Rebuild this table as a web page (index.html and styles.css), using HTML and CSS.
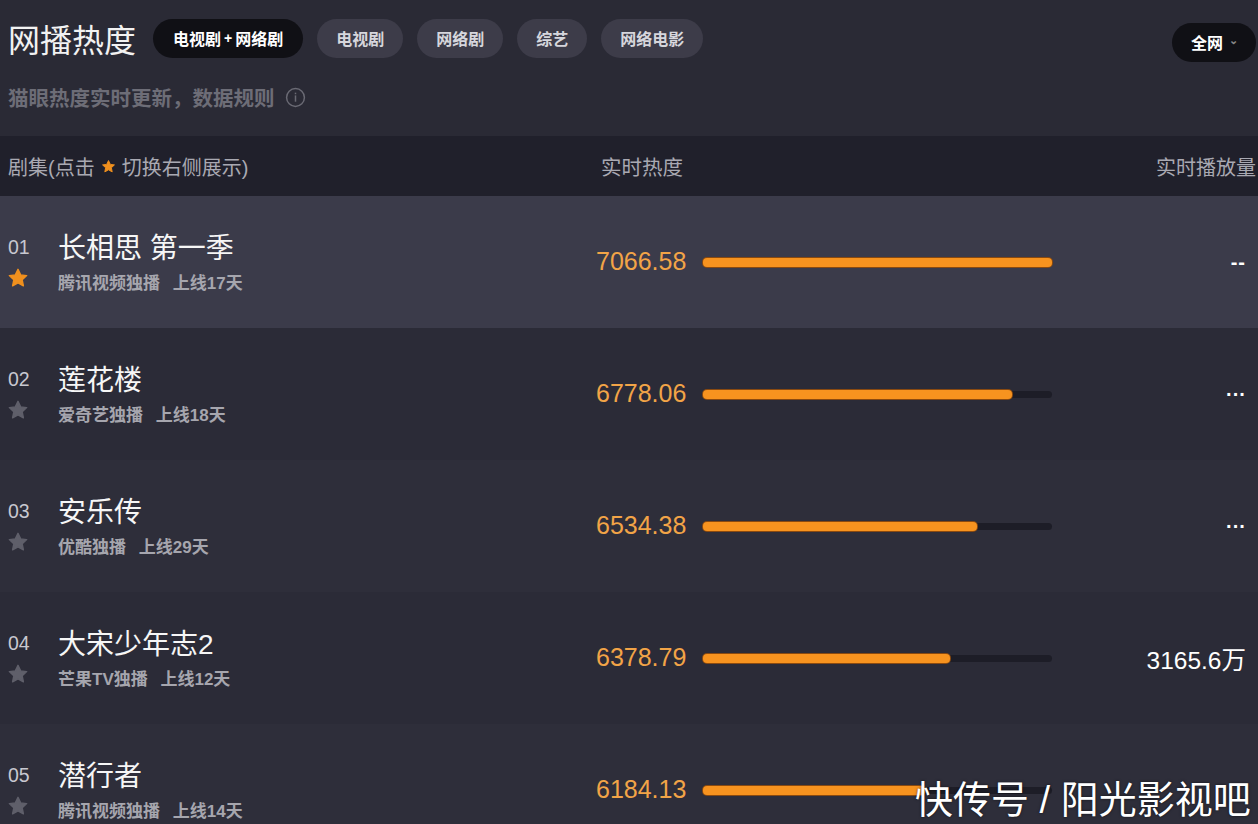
FILE: index.html
```html
<!DOCTYPE html>
<html>
<head>
    <meta charset="utf-8" />
    <title>网播热度</title>
    <link rel="stylesheet" href="styles.css">
</head>
<body>
    <div id="oldal">
        <div id="fejlec">
            <div class="fejlec-bal">
                <h1 class="cim">网播热度</h1>
                <span class="tab aktiv">电视剧<span class="plusz">+</span>网络剧</span>
                <span class="tab">电视剧</span>
                <span class="tab">网络剧</span>
                <span class="tab">综艺</span>
                <span class="tab">网络电影</span>
            </div>
            <span class="tab aktiv halo">全网 <span class="nyil">⌄</span></span>
        </div>
        <div class="alcim">猫眼热度实时更新，数据规则
            <svg class="info" viewBox="0 0 20 20" width="21" height="21"><circle cx="10" cy="10" r="8.5" fill="none" stroke="#6a6a74" stroke-width="1.4"/><rect x="9.3" y="8" width="1.4" height="6" fill="#6a6a74"/><rect x="9.3" y="5.4" width="1.4" height="1.5" fill="#6a6a74"/></svg>
        </div>

        <div class="sor fej">
            <div class="oszlop-nev">剧集(点击 <svg class="kis-csillag" viewBox="0 0 24 24" width="15" height="15"><path d="M12 2.5l2.9 6.1 6.6.8-4.9 4.6 1.3 6.6L12 17.3l-5.9 3.3 1.3-6.6-4.9-4.6 6.6-.8z" fill="#f0901e" stroke="#f0901e" stroke-width="1.5" stroke-linejoin="round"/></svg> 切换右侧展示)</div>
            <div class="oszlop-ho">实时热度</div>
            <div class="oszlop-lejatszas">实时播放量</div>
        </div>

        <div class="sor kiemelt">
            <div class="rang"><span>01</span><svg class="csillag" viewBox="0 0 24 24" width="22" height="22"><path d="M12 2.5l2.9 6.1 6.6.8-4.9 4.6 1.3 6.6L12 17.3l-5.9 3.3 1.3-6.6-4.9-4.6 6.6-.8z" fill="#f0901e" stroke="#f0901e" stroke-width="1.5" stroke-linejoin="round"/></svg></div>
            <div class="nev"><div class="musor">长相思 第一季</div><div class="info-sor">腾讯视频独播 <span>上线17天</span></div></div>
            <div class="ertek">7066.58</div>
            <div class="sav"><div class="toltes" style="width: 100%"></div></div>
            <div class="lejatszas kotojel">--</div>
        </div>

        <div class="sor">
            <div class="rang"><span>02</span><svg class="csillag" viewBox="0 0 24 24" width="22" height="22"><path d="M12 2.5l2.9 6.1 6.6.8-4.9 4.6 1.3 6.6L12 17.3l-5.9 3.3 1.3-6.6-4.9-4.6 6.6-.8z" fill="#5f5f6a" stroke="#5f5f6a" stroke-width="1.5" stroke-linejoin="round"/></svg></div>
            <div class="nev"><div class="musor">莲花楼</div><div class="info-sor">爱奇艺独播 <span>上线18天</span></div></div>
            <div class="ertek">6778.06</div>
            <div class="sav"><div class="toltes" style="width: 88.5%"></div></div>
            <div class="lejatszas pontok">···</div>
        </div>

        <div class="sor paros">
            <div class="rang"><span>03</span><svg class="csillag" viewBox="0 0 24 24" width="22" height="22"><path d="M12 2.5l2.9 6.1 6.6.8-4.9 4.6 1.3 6.6L12 17.3l-5.9 3.3 1.3-6.6-4.9-4.6 6.6-.8z" fill="#5f5f6a" stroke="#5f5f6a" stroke-width="1.5" stroke-linejoin="round"/></svg></div>
            <div class="nev"><div class="musor">安乐传</div><div class="info-sor">优酷独播 <span>上线29天</span></div></div>
            <div class="ertek">6534.38</div>
            <div class="sav"><div class="toltes" style="width: 78.5%"></div></div>
            <div class="lejatszas pontok">···</div>
        </div>

        <div class="sor">
            <div class="rang"><span>04</span><svg class="csillag" viewBox="0 0 24 24" width="22" height="22"><path d="M12 2.5l2.9 6.1 6.6.8-4.9 4.6 1.3 6.6L12 17.3l-5.9 3.3 1.3-6.6-4.9-4.6 6.6-.8z" fill="#5f5f6a" stroke="#5f5f6a" stroke-width="1.5" stroke-linejoin="round"/></svg></div>
            <div class="nev"><div class="musor">大宋少年志2</div><div class="info-sor">芒果TV独播 <span>上线12天</span></div></div>
            <div class="ertek">6378.79</div>
            <div class="sav"><div class="toltes" style="width: 70.8%"></div></div>
            <div class="lejatszas">3165.6万</div>
        </div>

        <div class="sor paros">
            <div class="rang"><span>05</span><svg class="csillag" viewBox="0 0 24 24" width="22" height="22"><path d="M12 2.5l2.9 6.1 6.6.8-4.9 4.6 1.3 6.6L12 17.3l-5.9 3.3 1.3-6.6-4.9-4.6 6.6-.8z" fill="#5f5f6a" stroke="#5f5f6a" stroke-width="1.5" stroke-linejoin="round"/></svg></div>
            <div class="nev"><div class="musor">潜行者</div><div class="info-sor">腾讯视频独播 <span>上线14天</span></div></div>
            <div class="ertek">6184.13</div>
            <div class="sav"><div class="toltes" style="width: 63.6%"></div></div>
            <div class="lejatszas"></div>
        </div>

        <div class="vizjel">快传号 / 阳光影视吧</div>
    </div>
</body>
</html>
```

FILE: styles.css
```css
html, body {
    margin: 0;
    height: 100%;
    overflow: hidden;
    background-color: #2a2a35;
    font-family: "Liberation Sans", "Noto Sans CJK SC", sans-serif;
    color: #fff;
}

#oldal {
    position: relative;
    height: 824px;
    overflow: hidden;
}

#fejlec {
    display: flex;
    align-items: center;
    justify-content: space-between;
    padding: 18px 2px 0 8px;
    height: 40px;
}

.fejlec-bal {
    display: flex;
    align-items: center;
    gap: 14px;
}

.cim {
    margin: 0 3px 0 0;
    font-size: 32px;
    font-weight: normal;
    color: #f2f2f2;
}

.tab {
    display: inline-flex;
    align-items: center;
    height: 39px;
    padding: 0 19px;
    border-radius: 20px;
    background-color: #3d3c49;
    color: #d6d6dc;
    font-size: 16px;
    font-weight: bold;
}

.tab.aktiv {
    background-color: #101015;
    color: #fff;
    padding: 0 20px;
}

.plusz {
    margin: 0 3px;
    font-size: 14px;
}

.tab.halo {
    margin-top: 8px;
    padding: 0 18px 0 19px;
    gap: 6px;
}

.nyil {
    font-size: 11px;
    color: #888;
    margin-top: -4px;
}

.alcim {
    display: flex;
    align-items: center;
    gap: 10px;
    margin: 29px 0 0 8px;
    height: 20px;
    font-size: 20.5px;
    color: #6d6d77;
    font-weight: bold;
}

.sor {
    display: grid;
    grid-template-columns: 50px 538px 92px 15px 349px 1fr;
    align-items: center;
    height: 132px;
    padding: 0 12px 0 8px;
    background-color: #2b2b37;
}

.sor.paros {
    background-color: #2e2e3a;
}

.sor.kiemelt {
    background-color: #3b3b4a;
}

.sor.fej {
    height: 60px;
    margin-top: 29px;
    padding-right: 2px;
    background-color: #20202b;
    color: #a9a9b2;
    font-size: 20px;
}

.oszlop-nev {
    grid-column: 1 / 3;
    display: flex;
    align-items: center;
    gap: 6px;
}

.oszlop-ho {
    grid-column: 3 / 6;
    padding-left: 5px;
    font-size: 20.5px;
}

.oszlop-lejatszas {
    text-align: right;
    font-size: 20px;
}

.rang {
    display: flex;
    flex-direction: column;
    gap: 8px;
    align-self: start;
    margin-top: 40px;
    font-size: 19.5px;
    color: #c8c8d0;
}

.csillag {
    margin-left: -1px;
}

.nev {
    align-self: start;
    margin-top: 35px;
}

.musor {
    font-size: 28px;
    line-height: 36px;
    color: #f6f6f6;
}

.info-sor {
    margin-top: 2px;
    font-size: 17px;
    font-weight: bold;
    color: #a6a6ae;
}

.info-sor span {
    margin-left: 8px;
}

.ertek {
    font-size: 25px;
    color: #f2a447;
    margin-top: -2px;
}

.sav {
    grid-column: 5;
    height: 7px;
    border-radius: 4px;
    background-color: #1d1d27;
}

.toltes {
    height: 9px;
    margin-top: -1px;
    border-radius: 4px;
    background-color: #f7931f;
    box-shadow: 0 0 0 1px #8a4a10;
}

.lejatszas {
    text-align: right;
    font-size: 24.5px;
    color: #fff;
}

.kotojel {
    font-weight: bold;
    font-size: 20px;
    letter-spacing: 1px;
}

.pontok {
    font-weight: bold;
    font-size: 20px;
    letter-spacing: 0;
}

.vizjel {
    position: absolute;
    left: 915px;
    top: 778px;
    font-size: 38px;
    line-height: 44px;
    color: #fff;
    text-shadow: 0 0 3px rgba(0, 0, 0, 0.6);
}
```
